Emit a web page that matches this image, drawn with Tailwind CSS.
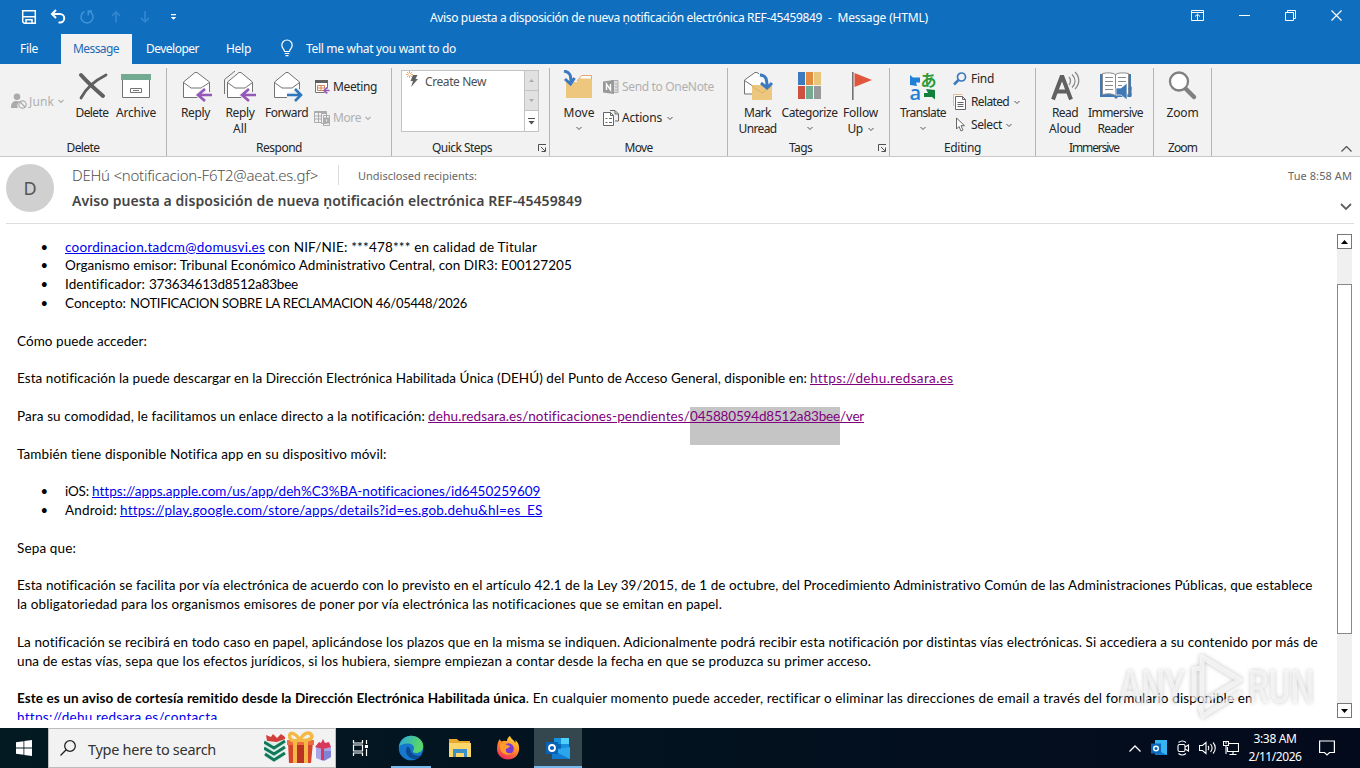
<!DOCTYPE html>
<html lang="es">
<head>
    <meta charset="UTF-8">
    <meta name="viewport" content="width=device-width, initial-scale=1.0">
    <title>Message (HTML)</title>
    <script src="https://cdn.jsdelivr.net/npm/@tailwindcss/browser@4"></script>
</head>
<body class="w-[1360px] h-[768px] overflow-hidden bg-white flex flex-col font-['Noto_Sans','Open_Sans',sans-serif] text-[12px] leading-4 text-[#262626] whitespace-nowrap">

    <!-- Title bar -->
    <header class="h-8 bg-[#106ebe] text-white flex items-center relative shrink-0">
        <div class="flex items-center pl-[21px] pt-[2px]">
            <svg class="w-4 h-4 mr-[13px]" viewBox="0 0 16 16" fill="none" stroke="#fff" stroke-width="1.5"><path d="M1.7 1.7h12.6v12.6H3.2L1.7 12.8zM2 7.7h12M5 14V10.8h6V14"/></svg>
            <svg class="w-4 h-4 mr-[13px]" viewBox="0 0 16 16" fill="none" stroke="#fff" stroke-width="2"><path d="M6 1 2 5l4 4M2.5 5H10a4 4 0 0 1 0 8.5H8.5"/></svg>
            <svg class="w-4 h-4 mr-[13px]" viewBox="0 0 16 16" fill="none" stroke="#3c92d6" stroke-width="1.6"><path d="M5.5 2.5A6 6 0 1 0 10 2.3M13 2H9.3v4.5"/></svg>
            <svg class="w-4 h-4 mr-[13px]" viewBox="0 0 16 16" fill="none" stroke="#3184cf" stroke-width="1.8"><path d="M8 13.5V3M4 6.8l4-4 4 4"/></svg>
            <svg class="w-4 h-4 mr-[13px]" viewBox="0 0 16 16" fill="none" stroke="#3184cf" stroke-width="1.8"><path d="M8 2v10.5M4 8.8l4 4 4-4"/></svg>
            <svg class="w-4 h-4" viewBox="0 0 16 16"><path fill="#fff" d="M5 5h5v1.3H5zM4.800 8h5.400L7.500 10.800z"/></svg>
        </div>
        <div class="ml-[248px] pt-[3px]"><span data-w="392">Aviso puesta a disposición de nueva ṇotificación electrónica REF-45459849</span><span data-w="106">&nbsp; -&nbsp; Message (HTML)</span></div>
        <div class="absolute right-0 top-0 h-full flex items-center pr-[18px] pb-[2px] gap-[35px]">
            <svg class="w-[13px] h-[11px]" viewBox="0 0 13 11" fill="none" stroke="#fff"><path d="M.5.5h12v10H.5zM.5 2.5h12M6.5 10V4.5M4 6.5l2.5-2.3L9 6.5"/></svg>
            <svg class="w-[11px] h-[11px]" viewBox="0 0 11 11" stroke="#fff"><path d="M0 5.500h11"/></svg>
            <svg class="w-[11px] h-[11px]" viewBox="0 0 11 11" fill="none" stroke="#fff"><path d="M.5 2.5h8v8h-8zM2.5 2.5v-2h8v8h-2"/></svg>
            <svg class="w-[11px] h-[11px]" viewBox="0 0 11 11" stroke="#fff" stroke-width="1.2"><path d="m.5.5 10 10m0-10-10 10"/></svg>
        </div>
    </header>

    <!-- Ribbon tabs -->
    <nav class="h-8 bg-[#106ebe] text-white flex items-center shrink-0">
        <span class="w-[61px] pl-5 pt-px"><span data-w="18">File</span></span>
        <span class="w-[71px] h-[30px] self-end bg-[#f2f2f2] text-[#1a6ab5] pl-3 leading-[30px]"><span data-w="46">Message</span></span>
        <span class="w-[94px] pl-[14px] pt-px"><span data-w="53">Developer</span></span>
        <span class="w-[53px] pt-px"><span data-w="25">Help</span></span>
        <svg class="w-4 h-[18px] mr-[11px]" viewBox="0 0 16 18" fill="none" stroke="#fff" stroke-width="1.2"><path d="M5.5 12.5c0-2.5-2.7-3-2.7-6.3a5.2 5.2 0 0 1 10.4 0c0 3.3-2.7 3.8-2.7 6.3zM5.7 14.5h4.6M6.500 16.700h3"/></svg>
        <span class="pt-px"><span data-w="150">Tell me what you want to do</span></span>
    </nav>

    <!-- Ribbon -->
    <section class="h-[93px] bg-[#f2f2f2] border-b border-[#c8c8c8] flex shrink-0 relative">
        <div class="w-[167px] h-[88px] mt-1 border-r border-[#b5b5b5] flex flex-col">
            <div class="flex flex-1 items-start pl-[11px] pt-[2px]">
                <div class="flex items-center h-4 mt-[23px] w-[61px] text-[#b0b0b0]">
                    <svg class="w-4 h-4 mr-[2px]" viewBox="0 0 16 16" fill="#ababab"><circle cx="6" cy="3.700" r="3.300"/><path d="M0 15c0-5 2-7 5-7 2 0 3 0 4 1-3 1-3 4-2 6z"/><g fill="none" stroke="#ababab" stroke-width="1.200"><circle cx="11.500" cy="11.500" r="3.700"/><path d="m9 9 5 5"/></g></svg>
                    <span class="mr-1 pt-px"><span data-w="25">Junk</span></span>
                    <svg class="w-[6px] h-[5px]" viewBox="0 0 6 5" fill="none" stroke="#b0b0b0" stroke-width="1.200"><path d="m.5 1 2.500 2.500L5.500 1"/></svg>
                </div>
                <div class="w-10 flex flex-col items-center">
                    <svg class="w-8 h-[34px]" viewBox="0 0 32 34" fill="none" stroke="#606060" stroke-linecap="round"><path stroke-width="4" d="M5 5c7 8 14 14 22 21"/><path stroke-width="2.800" d="M30 5C20 10 10 18 5 28"/></svg>
                    <span class="mt-[1px]" data-w="33">Delete</span>
                </div>
                <div class="w-12 flex flex-col items-center">
                    <svg class="w-8 h-[34px]" viewBox="0 0 32 34"><path fill="#fff" stroke="#737373" d="M2.500 8.500h27v19h-27z"/><path fill="#72ab92" d="M1 4h30v6H1z"/><path fill="#fff" stroke="#737373" d="M10.500 18.500h11v4h-11z"/><path stroke="#737373" d="M13 20.500h6"/></svg>
                    <span class="mt-[1px]" data-w="40">Archive</span>
                </div>
            </div>
            <div class="text-center h-4"><span data-w="33">Delete</span></div>
        </div>

        <div class="w-[225px] h-[88px] mt-1 border-r border-[#b5b5b5] flex flex-col">
            <div class="flex flex-1 items-start pl-[6px] pt-[2px]">
                <div class="w-[45px] flex flex-col items-center">
                    <svg class="w-8 h-[34px] ml-[3px]" viewBox="0 0 32 34" fill="none" stroke="#737373"><path fill="#fff" d="M2.500 12 14 2.500h2L28.500 12v15.500h-26z"/><path d="M2.500 12.500 10 18h10l8.500-5.500"/><path stroke="#f2f2f2" stroke-width="6" d="M31 25H18m6-6-6 6 6 6"/><path stroke="#9459b8" stroke-width="2.600" d="M31 25H17m7-6-7 6 7 6"/></svg>
                    <span class="mt-[1px]" data-w="29">Reply</span>
                </div>
                <div class="w-[44px] flex flex-col items-center">
                    <svg class="w-8 h-[34px]" viewBox="0 0 32 34" fill="none" stroke="#737373"><path d="M.5 24V9.500L11 1"/><path fill="#fff" d="M3.500 12 15 2.500h2L28.500 12v15.500h-25z"/><path d="M3.500 12.500 11 18h10l7.500-5.500"/><path stroke="#f2f2f2" stroke-width="6" d="M32 25H19m6-6-6 6 6 6"/><path stroke="#9459b8" stroke-width="2.600" d="M32 25H18m7-6-7 6 7 6"/></svg>
                    <span class="mt-[1px]" data-w="29">Reply</span>
                    <span data-w="14">All</span>
                </div>
                <div class="w-[49px] flex flex-col items-center">
                    <svg class="w-8 h-[34px] ml-[3px]" viewBox="0 0 32 34" fill="none" stroke="#737373"><path fill="#fff" d="M2.500 12 14 2.500h2L27.500 12v15.500h-25z"/><path d="M2.500 12.500 10 18h10l7.500-5.500"/><path stroke="#f2f2f2" stroke-width="6" d="M15 25h14m-6-6 6 6-6 6"/><path stroke="#2f76bd" stroke-width="2.600" d="M15 25h14m-6-6 6 6-6 6"/></svg>
                    <span class="mt-[1px]" data-w="43">Forward</span>
                </div>
                <div class="pl-[3px] pt-[9px] flex flex-col gap-[15px]">
                    <div class="flex items-center">
                        <svg class="w-4 h-4 mr-[3px]" viewBox="0 0 16 16"><path fill="#fff" stroke="#737373" d="M1.500 2.500h12v11h-12z"/><path fill="#606060" d="M1 1h13v3H1z"/><path stroke="#d5834e" fill="none" d="M3.500 6.500h7v5h-7zM7 6.500v5M3.500 9h7"/><path stroke="#f2f2f2" stroke-width="4" d="M16 11.500H10"/><path stroke="#9459b8" stroke-width="1.700" fill="none" d="M15.500 11.500H10m3-3-3 3 3 3"/></svg>
                        <span data-w="44">Meeting</span>
                    </div>
                    <div class="flex items-center text-[#b0b0b0]">
                        <svg class="w-4 h-4 mr-[3px]" viewBox="0 0 16 16" fill="#f2f2f2" stroke="#ababab"><path d="M.5 1.500h12v11H.5z"/><path stroke-width="2" d="M.5 2h12"/><path d="M1 6h11M1 9h11M4.500 3v9"/><path d="M7.500 3.500h5v10h-5zM9.500 5.500h6v10h-6z"/><path stroke-width="2" d="M11 8.500h3v4h-3z"/></svg>
                        <span class="mr-1" data-w="28">More</span>
                        <svg class="w-[6px] h-[5px]" viewBox="0 0 6 5" fill="none" stroke="#b0b0b0" stroke-width="1.200"><path d="m.5 1 2.500 2.500L5.500 1"/></svg>
                    </div>
                </div>
            </div>
            <div class="text-center h-4"><span data-w="46">Respond</span></div>
        </div>

        <div class="w-[158px] h-[88px] mt-1 border-r border-[#b5b5b5] flex flex-col relative">
            <div class="flex-1 pl-[9px] pt-[2px]">
                <div class="w-[138px] h-[62px] border border-[#c3c3c3] bg-white flex">
                    <div class="flex flex-1 pl-[3px] text-[#505050]">
                        <svg class="w-4 h-4 mr-[4px]" viewBox="0 0 16 16"><path fill="#606060" d="M8 4h4.500l-2 4H13l-7 8 2-6H5.500z"/><path stroke="#e2a04f" stroke-width=".9" d="M4.500 0v7M1 3.500h7M2 1l5 5m0-5L2 6"/><circle cx="4.500" cy="3.500" r="1.300" fill="#fff"/></svg>
                        <span class="pt-[3px]"><span data-w="61">Create New</span></span>
                    </div>
                    <div class="w-[14px] border-l border-[#c3c3c3] flex flex-col items-stretch">
                        <div class="h-5 bg-[#e1e1e1] border-b border-[#c3c3c3] flex items-center justify-center"><svg class="w-[5px] h-[3px]" viewBox="0 0 5 3" fill="#ababab"><path d="M0 3h5L2.500 0z"/></svg></div>
                        <div class="h-5 bg-[#e1e1e1] border-b border-[#c3c3c3] flex items-center justify-center"><svg class="w-[5px] h-[3px]" viewBox="0 0 5 3" fill="#ababab"><path d="M0 0h5L2.500 3z"/></svg></div>
                        <div class="flex-1 flex items-center justify-center"><svg class="w-[7px] h-[7px]" viewBox="0 0 7 7" fill="#505050"><path d="M0 0h7v1H0zM.5 3h6l-3 3.500z"/></svg></div>
                    </div>
                </div>
            </div>
            <div class="h-4 pl-10"><span data-w="60">Quick Steps</span></div>
            <svg class="absolute right-[3px] bottom-[4px] w-2 h-2" viewBox="0 0 8 8" fill="none" stroke="#505050"><path d="M.5 7V.5H8M3 3l4 4M7.500 3.500v4h-4"/></svg>
        </div>

        <div class="w-[178px] h-[88px] mt-1 border-r border-[#b5b5b5] flex flex-col">
            <div class="flex flex-1 items-start pl-[9px] pt-[2px]">
                <div class="w-10 flex flex-col items-center">
                    <svg class="w-8 h-[34px] mr-1" viewBox="0 0 32 34"><path fill="#ecc77d" d="M5 12h11l4-6h11v22H5z"/><path fill="#fff" d="M18.500 8.500 20.500 5.500H30v3z"/><path fill="none" stroke="#e6a573" d="m16 11 4.500-5.500H30.500V9"/><path fill="none" stroke="#3b7abf" stroke-width="3" d="M3 1c6 1 7 4 7 12M4 9l5.500 5 4-6"/></svg>
                    <span class="mt-[1px]" data-w="31">Move</span>
                    <svg class="w-[6px] h-[5px] mt-[5px]" viewBox="0 0 6 5" fill="none" stroke="#505050"><path d="m.5 1 2.500 2.500L5.500 1"/></svg>
                </div>
                <div class="pl-[4px] pt-[9px] flex flex-col gap-[15px]">
                    <div class="flex items-center text-[#b0b0b0]">
                        <svg class="w-4 h-4 mr-[3px]" viewBox="0 0 16 16"><path fill="#ddd" stroke="#b0b0b0" d="M8 1.500h7v12H8zM12 5h3M12 8h3M12 11h3"/><path fill="#999" d="M0 2.500 11 1v14L0 13.500z"/><path fill="none" stroke="#fff" stroke-width="1.400" d="M3.500 11V5l4 6V5"/></svg>
                        <span data-w="92">Send to OneNote</span>
                    </div>
                    <div class="flex items-center">
                        <svg class="w-4 h-4 mr-[3px]" viewBox="0 0 16 16" fill="#fff" stroke="#666"><path d="M.5 2.500h7l3 3v10H.5zM7.500 2.500v3h3"/><path d="M2.500 8.500h2m1.500 0h3m-6.500 4h2m1.500 0h3"/><path fill="none" d="M7 .5h5l3.500 3.500v7H12M12 1v3h3"/></svg>
                        <span class="mr-[5px]" data-w="40">Actions</span>
                        <svg class="w-[6px] h-[5px]" viewBox="0 0 6 5" fill="none" stroke="#505050"><path d="m.5 1 2.500 2.500L5.500 1"/></svg>
                    </div>
                </div>
            </div>
            <div class="text-center h-4"><span data-w="28">Move</span></div>
        </div>

        <div class="w-[162px] h-[88px] mt-1 border-r border-[#b5b5b5] flex flex-col relative">
            <div class="flex flex-1 items-start pl-[7px] pt-[2px]">
                <div class="w-[45px] flex flex-col items-center">
                    <svg class="w-8 h-[34px]" viewBox="0 0 32 34"><path fill="#fff" stroke="#737373" d="M2.500 10 13 2.500h2L25.500 10v14h-23z"/><path fill="none" stroke="#737373" d="m2.500 10.500 9 6"/><path fill="#ecc77d" d="M10 15h20v15H10z"/><path fill="none" stroke="#d9b064" d="m10 16 10 7 10-7"/><path fill="none" stroke="#f2f2f2" stroke-width="5" d="M17 5c6 0 8 4 8 10"/><path fill="none" stroke="#3b7abf" stroke-width="3" d="M18 5c6 0 7 4 7 12M19 13l6 5 5-5"/></svg>
                    <span class="mt-[1px]" data-w="27">Mark</span>
                    <span data-w="38">Unread</span>
                </div>
                <div class="w-[59px] flex flex-col items-center">
                    <svg class="w-6 h-[34px]" viewBox="0 0 24 34"><path fill="#3b7abf" d="M0 2h7v13H0z"/><path fill="#e38c3f" d="M8 2h7v13H8z"/><path fill="#e9c67b" d="M16 2h7v13h-7z"/><path fill="#cf4f42" d="M0 16h7v13H0z"/><path fill="#72ab92" d="M8 16h7v13H8z"/><path fill="#999" d="M16 16h7v13h-7z"/></svg>
                    <span class="mt-[1px]" data-w="56">Categorize</span>
                    <svg class="w-[6px] h-[5px] mt-[5px]" viewBox="0 0 6 5" fill="none" stroke="#505050"><path d="m.5 1 2.500 2.500L5.500 1"/></svg>
                </div>
                <div class="w-[43px] flex flex-col items-center">
                    <svg class="w-8 h-[34px]" viewBox="0 0 32 34"><path fill="#737373" d="M7 2h1.600v28H7z"/><path fill="#e2563e" d="M9.500 3 27 10 9.500 17z"/></svg>
                    <span class="mt-[1px]" data-w="35">Follow</span>
                    <span class="flex items-center gap-[5px]"><span data-w="15">Up</span><svg class="w-[6px] h-[5px]" viewBox="0 0 6 5" fill="none" stroke="#505050"><path d="m.5 1 2.500 2.500L5.500 1"/></svg></span>
                </div>
            </div>
            <div class="h-4 pl-[61px]"><span data-w="23">Tags</span></div>
            <svg class="absolute right-[3px] bottom-[4px] w-2 h-2" viewBox="0 0 8 8" fill="none" stroke="#505050"><path d="M.5 7V.5H8M3 3l4 4M7.500 3.500v4h-4"/></svg>
        </div>

        <div class="w-[146px] h-[88px] mt-1 border-r border-[#b5b5b5] flex flex-col">
            <div class="flex flex-1 items-start pl-[8px] pt-[2px]">
                <div class="w-[50px] flex flex-col items-center">
                    <svg class="w-8 h-[34px]" viewBox="0 0 32 34"><path fill="#1f80d8" d="M3 5l3 2.500h7v5H9l1 3.500-7-1z"/><path fill="#11803a" d="M28 29.500l-3-2.500h-8v-4h4l-2-4 9 1z"/><text x="13.500" y="16" font-size="16" font-weight="700" fill="#2d9a37" font-family="Noto Sans CJK JP, sans-serif">あ</text><text x="2.500" y="29.500" font-size="20" font-weight="600" fill="#1f80d8" font-family="Open Sans, sans-serif">a</text></svg>
                    <span class="mt-[1px]" data-w="46">Translate</span>
                    <svg class="w-[6px] h-[5px] mt-[5px]" viewBox="0 0 6 5" fill="none" stroke="#505050"><path d="m.5 1 2.500 2.500L5.500 1"/></svg>
                </div>
                <div class="pl-[5px] pt-[1px] flex flex-col gap-[7px]">
                    <div class="flex items-center">
                        <svg class="w-[14px] h-4 mr-[4px]" viewBox="0 0 14 16" fill="none" stroke="#3b7abf" stroke-width="1.700"><circle cx="8.500" cy="6" r="4"/><path stroke-width="2.500" d="M5.500 9 1 13.500"/></svg>
                        <span data-w="23">Find</span>
                    </div>
                    <div class="flex items-center">
                        <svg class="w-[14px] h-4 mr-[4px]" viewBox="0 0 14 16" fill="#fff"><path stroke="#e8bd87" d="M.5 12V.5h9"/><path stroke="#666" d="M2.500 2.500h7l3 3v10h-10zM9.500 2.500v3h3"/><path stroke="#666" d="M4.500 8.500h6m-6 2h6m-6 2h6"/></svg>
                        <span class="mr-[5px]" data-w="38">Related</span>
                        <svg class="w-[6px] h-[5px]" viewBox="0 0 6 5" fill="none" stroke="#505050"><path d="m.5 1 2.500 2.500L5.500 1"/></svg>
                    </div>
                    <div class="flex items-center">
                        <svg class="w-[14px] h-4 mr-[4px]" viewBox="0 0 14 16" fill="#fff" stroke="#666"><path d="M3.500 1v11l2.500-2.500 2 4.500 2-1-2-4.300h3.500z"/></svg>
                        <span class="mr-[4px]" data-w="31">Select</span>
                        <svg class="w-[6px] h-[5px]" viewBox="0 0 6 5" fill="none" stroke="#505050"><path d="m.5 1 2.500 2.500L5.500 1"/></svg>
                    </div>
                </div>
            </div>
            <div class="text-center h-4"><span data-w="37">Editing</span></div>
        </div>

        <div class="w-[118px] h-[88px] mt-1 border-r border-[#b5b5b5] flex flex-col">
            <div class="flex flex-1 items-start pl-[9px] pt-[2px]">
                <div class="w-10 flex flex-col items-center">
                    <svg class="w-8 h-[34px]" viewBox="0 0 32 34" fill="none" stroke="#606060"><path stroke-width="4" d="M4 29.500 12.500 7h1L22 29.500M7 21.500h12"/><path stroke="#888" stroke-width="1.300" d="M20 7c2 2 2 6 0 8M23 4.500c4 4 4 9 0 13M26 2c5 5 5 12 0 17"/></svg>
                    <span class="mt-[1px]" data-w="26">Read</span>
                    <span data-w="32">Aloud</span>
                </div>
                <div class="w-[61px] flex flex-col items-center">
                    <svg class="w-8 h-[34px]" viewBox="0 0 32 34"><path fill="#3f78b5" d="M0 4h31v23H18l-2 2-2-2H0z"/><path fill="#fff" stroke="#8a8a8a" d="M2.500 3.500c5-1 10-1 13 1 3-2 8-2 13-1v21c-5-1-10-1-13 1-3-2-8-2-13-1z"/><path stroke="#8a8a8a" fill="none" d="M15.500 4.500v22M5 7.500h8M5 11.500h8M5 15.500h8M5 19.500h8M18 7.500h8M18 11.500h8M18 15.500h4"/><path fill="#3f78b5" stroke="#fff" stroke-width=".7" d="M16 18h5l6-5v17l-6-5h-5z"/><path fill="none" stroke="#3f78b5" d="M28.500 18c1.500 2 1.500 5 0 7M30.500 16c2 3 2 8 0 11"/></svg>
                    <span class="mt-[1px]" data-w="55">Immersive</span>
                    <span data-w="36">Reader</span>
                </div>
            </div>
            <div class="h-4 pl-[33px]"><span data-w="50">Immersive</span></div>
        </div>

        <div class="w-[58px] h-[88px] mt-1 border-r border-[#b5b5b5] flex flex-col">
            <div class="flex flex-1 items-start justify-center pt-[2px]">
                <div class="flex flex-col items-center">
                    <svg class="w-8 h-[34px]" viewBox="0 0 32 34" fill="#fff" stroke="#808080"><path stroke-width="4.500" stroke-linecap="round" d="m19 19 8 8"/><circle cx="12" cy="11.500" r="9" stroke-width="2.300"/></svg>
                    <span class="mt-[1px]" data-w="32">Zoom</span>
                </div>
            </div>
            <div class="text-center h-4"><span data-w="29">Zoom</span></div>
        </div>
        <svg class="absolute right-2 bottom-1 w-[11px] h-[6px]" viewBox="0 0 11 6" fill="none" stroke="#505050" stroke-width="1.200"><path d="m.5 5.500 5-5 5 5"/></svg>
    </section>

    <!-- Message header -->
    <section class="h-[67px] mx-[6px] border-b border-[#dedede] flex shrink-0 text-[#666]">
        <div class="w-12 h-12 mt-[7px] rounded-full bg-[#d0d0d0] text-[#555] text-[18px] flex items-center justify-center">D</div>
        <div class="ml-[18px] pt-[8px] flex-1">
            <div class="flex items-center h-5">
                <span class="text-[15px] font-light text-[#505050]" data-w="246">DEHú &lt;notificacion-F6T2@aeat.es.gf&gt;</span>
                <span class="w-px h-5 bg-[#dcdcdc] ml-5 mr-[19px]"></span>
                <span class="text-[11px] pt-[2px]" data-w="119">Undisclosed recipients:</span>
            </div>
            <div class="mt-[6px] leading-5 text-[14px] font-semibold text-[#444]"><span data-w="510">Aviso puesta a disposición de nueva ṇotificación electrónica REF-45459849</span></div>
        </div>
        <div class="flex flex-col items-end pt-[11px] pr-[2px]">
            <span class="text-[11px]" data-w="64">Tue 8:58 AM</span>
            <svg class="w-3 h-[8px] mt-[19px]" viewBox="0 0 12 8" fill="none" stroke="#606060" stroke-width="1.800"><path d="m1 1 5 5 5-5"/></svg>
        </div>
    </section>

    <!-- Message body -->
    <main class="h-[504px] flex shrink-0 relative">
        <article class="w-[1337px] h-[496px] overflow-hidden pl-[17px] pt-[13.5px] font-['Lato','Open_Sans',sans-serif] text-[13.5px] leading-[18.83px] text-black flex flex-col gap-[18.83px]">
            <ul>
                <li class="flex"><span class="w-12 pl-[23.5px] text-[13px]">•</span><a class="text-[#0000ee] underline" data-w="200">coordinacion.tadcm@domusvi.es</a><span class="ml-[3px]" data-w="269">con NIF/NIE: ***478*** en calidad de Titular</span></li>
                <li class="flex"><span class="w-12 pl-[23.5px] text-[13px]">•</span><span data-w="507">Organismo emisor: Tribunal Económico Administrativo Central, con DIR3: E00127205</span></li>
                <li class="flex"><span class="w-12 pl-[23.5px] text-[13px]">•</span><span data-w="80">Identificador:</span><span class="ml-[4px]" data-w="149">373634613d8512a83bee</span></li>
                <li class="flex"><span class="w-12 pl-[23.5px] text-[13px]">•</span><span data-w="61">Concepto:</span><span class="ml-[4px] text-[13px]" data-w="337">NOTIFICACION SOBRE LA RECLAMACION 46/05448/2026</span></li>
            </ul>
            <p class="flex"><span data-w="130">Cómo puede acceder:</span></p>
            <p class="flex"><span data-w="790">Esta notificación la puede descargar en la Dirección Electrónica Habilitada Única (DEHÚ) del Punto de Acceso General, disponible en:</span><a class="ml-[3px] text-[#800080] underline" data-w="143">https://dehu.redsara.es</a></p>
            <p class="flex relative"><span class="absolute left-[673px] top-0 w-[150px] h-[38px] bg-[#c5c5c5]"></span><span data-w="408">Para su comodidad, le facilitamos un enlace directo a la notificación:</span><a class="ml-[3px] text-[#800080] underline" data-w="262">dehu.redsara.es/notificaciones-pendientes/</a><a class="relative text-[#800080] underline" data-w="150">045880594d8512a83bee</a><a class="text-[#800080] underline" data-w="24">/ver</a></p>
            <p class="flex"><span data-w="370">También tiene disponible Notifica app en su dispositivo móvil:</span></p>
            <ul>
                <li class="flex"><span class="w-12 pl-[23.5px] text-[13px]">•</span><span data-w="24">iOS:</span><a class="ml-[3px] text-[#0000ee] underline" data-w="448">https://apps.apple.com/us/app/deh%C3%BA-notificaciones/id6450259609</a></li>
                <li class="flex"><span class="w-12 pl-[23.5px] text-[13px]">•</span><span data-w="52">Android:</span><a class="ml-[3px] text-[#0000ee] underline" data-w="422">https://play.google.com/store/apps/details?id=es.gob.dehu&amp;hl=es_ES</a></li>
            </ul>
            <p class="flex"><span data-w="59">Sepa que:</span></p>
            <p class="flex flex-col items-start"><span data-w="1296">Esta notificación se facilita por vía electrónica de acuerdo con lo previsto en el artículo 42.1 de la Ley 39/2015, de 1 de octubre, del Procedimiento Administrativo Común de las Administraciones Públicas, que establece</span><span data-w="705">la obligatoriedad para los organismos emisores de poner por vía electrónica las notificaciones que se emitan en papel.</span></p>
            <p class="flex flex-col items-start"><span data-w="1301">La notificación se recibirá en todo caso en papel, aplicándose los plazos que en la misma se indiquen. Adicionalmente podrá recibir esta notificación por distintas vías electrónicas. Si accediera a su contenido por más de</span><span data-w="854">una de estas vías, sepa que los efectos jurídicos, si los hubiera, siempre empiezan a contar desde la fecha en que se produzca su primer acceso.</span></p>
            <div>
                <p class="flex"><b data-w="509">Este es un aviso de cortesía remitido desde la Dirección Electrónica Habilitada única</b><span data-w="727">. En cualquier momento puede acceder, rectificar o eliminar las direcciones de email a través del formulario disponible en</span></p>
                <p class="flex"><a class="text-[#0000ee] underline" data-w="200">https://dehu.redsara.es/contacta</a></p>
            </div>
        </article>

        <!-- Scrollbar -->
        <div class="w-[15px] h-[484px] mt-[10px] bg-[#f0f0f0] flex flex-col items-center">
            <div class="w-full h-[15px] bg-white border border-[#777] flex items-center justify-center"><svg class="w-[7px] h-1" viewBox="0 0 7 4"><path d="M0 4h7L3.500 0z"/></svg></div>
            <div class="w-full h-[350px] mt-[35px] mb-auto bg-white border border-[#888]"></div>
            <div class="w-full h-[15px] bg-white border border-[#777] flex items-center justify-center"><svg class="w-[7px] h-1" viewBox="0 0 7 4"><path d="M0 0h7L3.500 4z"/></svg></div>
        </div>

        <!-- Watermark -->
        <svg class="absolute left-[1112px] top-[428px] w-[208px] h-[72px] drop-shadow-[0_0_2px_rgba(0,0,0,0.35)]" viewBox="0 0 208 72" fill="#fff" fill-opacity=".6" font-family="Roboto, sans-serif" font-size="46" font-weight="500">
            <text x="7" y="51" textLength="66" lengthAdjust="spacingAndGlyphs">ANY</text>
            <text x="136" y="51" textLength="66" lengthAdjust="spacingAndGlyphs">RUN</text>
            <path fill="none" stroke="#fff" stroke-opacity=".7" stroke-width="5" stroke-linejoin="round" d="M82 49V17l8-1M90 50V5l38 23-35 21M88 54l3 10 38-24"/>
        </svg>
    </main>

    <!-- Taskbar -->
    <footer class="h-10 bg-linear-to-r from-[#031a22] to-[#030a1c] flex items-center text-white shrink-0">
        <div class="w-12 flex justify-center"><svg class="w-4 h-4" viewBox="0 0 16 16" fill="#fff"><path d="M0 2.300 7.500 1.200v6.400H0zM8.300 1.100 16 0v7.600H8.300zM0 8.400h7.500v6.400L0 13.700zM8.300 8.400H16V16l-7.700-1.100z"/></svg></div>
        <div class="w-72 h-10 bg-[#f2f2f2] border border-[#bdbdbd] flex items-center pl-[11px] text-[#333]">
            <svg class="w-4 h-4 mr-3" viewBox="0 0 16 16" fill="none" stroke="#222" stroke-width="1.300"><circle cx="10" cy="6" r="5.300"/><path d="M6.200 9.800.5 15.500"/></svg>
            <span class="text-[14.5px] pt-px" data-w="128">Type here to search</span>
            <svg class="w-[68px] h-[34px] ml-[48px]" viewBox="0 0 68 34">
                <path fill="#d43e3a" d="M3 10 2 4l5 2 2-3 4 4 4-4 4 3v6z"/><path fill="#d9f0e6" d="M0 9l10 3 11-4-1 18-10 5-9-4z"/><path fill="none" stroke="#12775a" stroke-width="3" d="m0 11 10 6 11-7M0 17l10 6 11-7M1 23l9 6 11-7"/>
                <path fill="#d8432c" d="M24 11h25l-2 21H25z"/><path fill="#ee6a3f" d="M23 9h27v5H23z"/><path fill="#b93224" d="M33 14h7v18h-7z"/><path fill="#f4b846" d="M29 9h4v23h-4zM40 9h4v23h-4z"/><path fill="none" stroke="#f4b846" stroke-width="3.500" d="M36 9C30 0 24 1 26 7c1 3 6 3 10 2 4-8 10-9 12-4 0 4-7 5-12 4"/>
                <path fill="#a9a3e8" d="M52 16h15v10l-8 4-7-3z"/><path fill="#d8395a" d="M51 16l4-5 2 1 2-4 2 4 4-1 2 5-8 2zM57 17h3v12h-3z"/><path fill="#7f83d6" d="M60 20h7v6l-7 4z"/>
            </svg>
        </div>
        <div class="w-12 flex justify-center"><svg class="w-4 h-4" viewBox="0 0 16 16" fill="none" stroke="#fff" stroke-width="1.200"><path d="M1.500 0v3h9V0M1.500 16v-3h9v3M1.500 5h9v6h-9zM14.500 0v4M14.500 9v7"/><path fill="#fff" d="M13.500 5.500h2v2h-2z"/></svg></div>
        <div class="w-[54px] h-10 flex flex-col items-center justify-end">
            <svg class="w-[26px] h-[26px] mb-[5px]" viewBox="0 0 26 26"><defs><linearGradient id="edge" x1="0" y1="0" x2="1" y2=".3"><stop offset="0" stop-color="#2aa5dd"/><stop offset=".9" stop-color="#56d66c"/></linearGradient></defs><circle cx="13" cy="13" r="12.300" fill="#1578cc"/><path fill="url(#edge)" d="M1 12C2 4 8 .7 13 .7c7 0 12.300 5 12.300 10.300 0 5-4 7-7 7-3 0-4-1-3-2.500 2-3 0-7-5-7C6 8.500 2 10 1 12z"/><path fill="#0c4a94" d="M9 12c-3 5 1 12 8 12 3 0 5-2 7-4-3 1-7 1-9-1-2-1-2-3-3-5-.5-1.500-2-3-3-2z"/></svg>
            <div class="w-10 h-[2px] bg-[#76b9ed]"></div>
        </div>
        <div class="w-[44px] flex justify-center"><svg class="w-6 h-6" viewBox="0 0 24 24"><path fill="#e8a92d" d="M1 3h8l2 2h11v6H1z"/><path fill="#fbd66b" d="M1 7h22v14H1z"/><path fill="#3d8fc9" d="M5 13h14v8h-3v-4H8v4H5z"/></svg></div>
        <div class="w-[52px] flex justify-center"><svg class="w-6 h-6" viewBox="0 0 24 24"><defs><linearGradient id="fox" x1=".8" y1="0" x2=".3" y2="1"><stop offset="0" stop-color="#ffdf3d"/><stop offset=".5" stop-color="#ff8a27"/><stop offset="1" stop-color="#f0285d"/></linearGradient></defs><path fill="url(#fox)" d="M4 3c0 1 .5 2 1.500 2.500C8 4 9 5 11 5c0-2 1-4 3-5 1 3 4 4 5.500 7V4c3 3 4 6 3.500 10-1 6-5 9.500-11 9.500S1 19 1 13C1 9 2 5 4 3z"/><circle cx="12.500" cy="12.500" r="5.300" fill="#7a3ad8"/><path fill="#ff9d2c" d="M4 9c3-2 5-1 7 0l3 1c-1 2-3 2-4 3-1 3 2 5 6 4-3 3-9 2-11-2-1-2-1-4-1-6z"/></svg></div>
        <div class="w-12 h-10 bg-[#34464e] flex flex-col items-center justify-end">
            <svg class="w-6 h-6 mb-[6px]" viewBox="0 0 24 24"><path fill="#1490df" d="M8 2h15v12H8z"/><path fill="#50d0f8" d="M15 2h8v6h-8z"/><path fill="#0b64b4" d="M8 8h7v6H8z"/><path fill="#2aa7ec" d="M6 14l18-3v12H6z"/><path fill="#117bd0" d="m6 14 18 9H6z"/><path fill="#0a61b8" d="M0 6h12v12H0z"/><circle cx="6" cy="12" r="3" fill="none" stroke="#fff" stroke-width="1.800"/></svg>
            <div class="w-full h-[2px] bg-[#76b9ed]"></div>
        </div>
        <div class="ml-auto flex items-center pr-[25px]">
            <svg class="w-3 h-[7px] mr-[10px]" viewBox="0 0 12 7" fill="none" stroke="#fff" stroke-width="1.300"><path d="m.5 6.500 5.500-5.500 5.500 5.500"/></svg>
            <svg class="w-4 h-4 mr-[10px]" viewBox="0 0 16 16"><path fill="#36b4f2" d="M4 0h12v15H4z"/><path fill="#1279cc" d="M4 9l12 6H4z"/><path fill="#0a66b8" d="M0 3.500h10v10H0z"/><circle cx="5" cy="8.500" r="2.300" fill="none" stroke="#fff" stroke-width="1.400"/></svg>
            <svg class="w-[13px] h-4 mr-[9px]" viewBox="0 0 13 16" fill="none" stroke="#fff" stroke-width="1.100"><rect x="1" y="4.500" width="7" height="7" rx="1.500"/><path d="m8 7 3.500-2v6L8 9M1.500 2.500C4 .5 6.500.5 9 2.500M1.500 13.500c2.500 2 5 2 7.500 0"/></svg>
            <svg class="w-[17px] h-4 mr-[7px]" viewBox="0 0 17 16" fill="none" stroke="#fff" stroke-width="1.100"><path d="M.5 5.500h3l3.500-3v11l-3.500-3h-3zM9 6c1 1 1 3 0 4M11.500 4c2 2.500 2 5.500 0 8M14 2.500c3 3 3 8 0 11"/></svg>
            <svg class="w-4 h-4 mr-[9px]" viewBox="0 0 16 16" fill="none" stroke="#fff" stroke-width="1.100"><path d="M6 3.500h9.500v8H4.500V7M10 11.500v3M6.500 14.500h7M.5 1.500h5v4h-5zM3 5.500V14M2 3h2"/></svg>
            <div class="w-[54px] text-center leading-[18px] mr-[17px]">
                <div><span data-w="43">3:38 AM</span></div>
                <div><span data-w="53">2/11/2026</span></div>
            </div>
            <svg class="w-4 h-4" viewBox="0 0 16 16" fill="none" stroke="#fff" stroke-width="1.200"><path d="M.6 1h14.800v11.500h-4.900l-2.500 2.500-2.500-2.500H.6z"/></svg>
        </div>
    </footer>

    <script>
        document.querySelectorAll('[data-w]').forEach(el => {
            const target = Number(el.dataset.w);
            const width = el.getBoundingClientRect().width;
            el.style.letterSpacing = `${(target - width) / el.textContent.length}px`;
        });
    </script>
</body>
</html>
